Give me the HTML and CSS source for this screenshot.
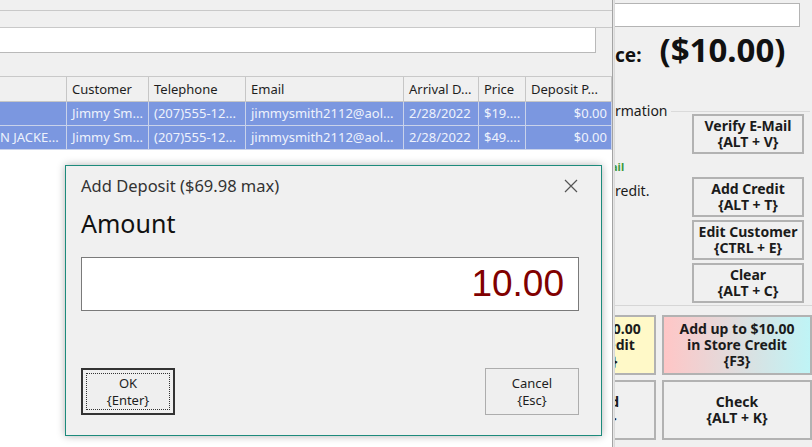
FILE: index.html
```html
<!DOCTYPE html>
<html lang="en">
<head>
    <meta charset="UTF-8">
    <meta name="viewport" content="width=device-width, initial-scale=1.0">
    <title>Add Deposit</title>
    <link rel="stylesheet" href="styles.css">
</head>
<body>
<div class="screen">
    <!-- Orders list -->
    <div class="orders">
        <div class="toolbar"></div>
        <div class="search-row"><div class="search-box"></div></div>
        <div class="grid">
            <div class="grid-row head">
                <div class="cell"></div>
                <div class="cell">Customer</div>
                <div class="cell">Telephone</div>
                <div class="cell">Email</div>
                <div class="cell">Arrival D...</div>
                <div class="cell">Price</div>
                <div class="cell">Deposit P...</div>
            </div>
            <div class="grid-row selected">
                <div class="cell"></div>
                <div class="cell">Jimmy Sm...</div>
                <div class="cell">(207)555-12...</div>
                <div class="cell">jimmysmith2112@aol...</div>
                <div class="cell">2/28/2022</div>
                <div class="cell">$19....</div>
                <div class="cell num">$0.00</div>
            </div>
            <div class="grid-row selected">
                <div class="cell first">N JACKE...</div>
                <div class="cell">Jimmy Sm...</div>
                <div class="cell">(207)555-12...</div>
                <div class="cell">jimmysmith2112@aol...</div>
                <div class="cell">2/28/2022</div>
                <div class="cell">$49....</div>
                <div class="cell num">$0.00</div>
            </div>
        </div>
    </div>

    <div class="splitter"></div>

    <!-- Customer side panel -->
    <div class="side">
        <div class="side-search"></div>
        <div class="balance">
            <span class="balance-label">ce:</span>
            <span class="balance-value">($10.00)</span>
        </div>
        <fieldset class="info">
            <legend>rmation</legend>
            <div class="info-body">
                <div class="info-notes">
                    <div class="verified">ail</div>
                    <div class="note">redit.</div>
                </div>
                <div class="info-buttons">
                    <button class="btn verify">Verify E-Mail<br>{ALT + V}</button>
                    <button class="btn">Add Credit<br>{ALT + T}</button>
                    <button class="btn">Edit Customer<br>{CTRL + E}</button>
                    <button class="btn">Clear<br>{ALT + C}</button>
                </div>
            </div>
        </fieldset>
        <div class="actions">
            <div class="clip"><button class="btn tall yellow">Use $10.00<br>as Credit<br>{F2}</button></div>
            <button class="btn tall gradient">Add up to $10.00<br>in Store Credit<br>{F3}</button>
            <div class="clip"><button class="btn tall wide">Card<br>{F4}</button></div>
            <button class="btn tall">Check<br>{ALT + K}</button>
        </div>
    </div>

    <!-- Modal dialog -->
    <div class="dialog">
        <div class="dialog-title">
            <span>Add Deposit ($69.98 max)</span>
            <svg class="close" width="14" height="14" viewBox="0 0 14 14">
                <path d="M1 1 L13 13 M13 1 L1 13" stroke="#555" stroke-width="1.2" fill="none"/>
            </svg>
        </div>
        <div class="amount-label">Amount</div>
        <div class="amount-input">10.00</div>
        <div class="dialog-buttons">
            <button class="dlg-btn default"><span class="focus">OK<br>{Enter}</span></button>
            <button class="dlg-btn">Cancel<br>{Esc}</button>
        </div>
    </div>
</div>
</body>
</html>
```

FILE: styles.css
```css
* {
    box-sizing: border-box;
}

body {
    margin: 0;
    background: #f0f0f0;
    font-family: 'Noto Sans', sans-serif;
    color: #1b1b1b;
}

.screen {
    position: relative;
    display: flex;
    width: 812px;
    height: 447px;
    overflow: hidden;
}

/* Orders list */
.orders {
    width: 612px;
    display: flex;
    flex-direction: column;
}

.toolbar {
    height: 11px;
    border-bottom: 1px solid #c9c9c9;
}

.search-row {
    margin-top: 16px;
    height: 49px;
    border-top: 1px solid #c9c9c9;
}

.search-box {
    width: 596px;
    height: 25px;
    background: #fff;
    border-right: 1px solid #b9b9b9;
    border-bottom: 1px solid #b9b9b9;
}

.grid {
    flex: 1;
    background: #fff;
    border-top: 1px solid #c9c9c9;
}

.grid-row {
    display: grid;
    grid-template-columns: 67px 82px 97px 158px 75px 47px 86px;
    height: 24px;
    font-size: 13px;
    line-height: 23px;
}

.grid-row.head {
    height: 25px;
    line-height: 24px;
    background: #f0f0f0;
    color: #1e1e1e;
}

.grid-row.head .cell {
    border-right: 1px solid #c6c6c6;
    border-bottom: 1px solid #c6c6c6;
}

.cell {
    padding: 0 5px;
    white-space: nowrap;
    overflow: hidden;
}

.cell.first {
    padding-left: 0;
}

.cell.num {
    text-align: right;
    padding-right: 4px;
}

.grid-row.selected {
    background: #7b97e0;
    color: #eef2fc;
}

.grid-row.selected .cell {
    border-right: 1px solid #c9d2ea;
    border-bottom: 1px solid #c9d2ea;
}

.splitter {
    width: 3px;
    border-left: 1px solid #a3a3a3;
    border-right: 1px solid #d9d9d9;
    background: #e6e6e6;
}

/* Side panel */
.side {
    width: 197px;
    display: flex;
    flex-direction: column;
    overflow: hidden;
}

.side-search {
    margin: 3px 12px 0 0;
    height: 24px;
    background: #fff;
    border: 1px solid #b4b4b4;
    border-left: none;
}

.balance {
    display: flex;
    align-items: baseline;
    gap: 18px;
    height: 50px;
    padding-top: 4px;
    font-weight: bold;
    color: #111;
}

.balance-label {
    font-size: 19px;
}

.balance-value {
    font-size: 33px;
    line-height: 38px;
}

.info {
    margin: 31px 2px 0 0;
    padding: 0;
    border: none;
    border-top: 1px solid #dadada;
    min-inline-size: 0;
}

.info legend {
    padding: 0 3px 0 0;
    font-size: 14px;
    line-height: 6px;
}

.info-body {
    display: flex;
}

.info-notes {
    width: 77px;
    overflow: hidden;
}

.verified {
    margin: 47px 0 0 -4px;
    font-size: 11px;
    line-height: 12px;
    font-weight: bold;
    color: #3c9a3c;
}

.note {
    margin-top: 10px;
    font-size: 14px;
    line-height: 16px;
}

.info-buttons {
    display: flex;
    flex-direction: column;
    gap: 3px;
    width: 112px;
}

.btn {
    height: 40px;
    padding: 0;
    background: #f0f0f0;
    border: 2px solid #b2b2b2;
    font-family: 'Noto Sans', sans-serif;
    font-size: 14px;
    line-height: 16px;
    font-weight: bold;
    color: #1b1b1b;
    white-space: nowrap;
}

.btn.verify {
    margin-bottom: 20px;
}

.actions {
    display: grid;
    grid-template-columns: 41px 150px;
    grid-template-rows: 60px 60px;
    column-gap: 6px;
    row-gap: 5px;
    margin-top: 2px;
    padding-top: 9px;
    border-top: 1px solid #d6d6d6;
}

.btn.tall {
    height: 60px;
}

.clip {
    display: flex;
    justify-content: flex-end;
    overflow: hidden;
}

.clip .btn {
    flex-shrink: 0;
    width: 104px;
}

.clip .btn.wide {
    width: 106px;
}

.btn.yellow {
    background: #fff9c8;
}

.btn.gradient {
    background: linear-gradient(to right, #ffc6c6, #bff4f6);
}

/* Modal dialog */
.dialog {
    position: absolute;
    left: 65px;
    top: 165px;
    width: 537px;
    height: 271px;
    padding: 0 22px 0 15px;
    background: #f0f0f0;
    border: 1px solid #1d8b7c;
    box-shadow: 0 0 8px rgba(0, 0, 0, 0.3);
}

.dialog-title {
    display: flex;
    justify-content: space-between;
    align-items: center;
    height: 39px;
    font-size: 16.5px;
    color: #333;
}

.close {
    margin-right: 1px;
}

.amount-label {
    margin-top: 3px;
    font-size: 25px;
    line-height: 30px;
    color: #111;
}

.amount-input {
    display: flex;
    align-items: center;
    justify-content: flex-end;
    margin-top: 19px;
    height: 54px;
    padding-right: 14px;
    background: #fff;
    border: 1px solid #7a7a7a;
    font-family: 'Liberation Sans', sans-serif;
    font-size: 37px;
    color: #800000;
}

.dialog-buttons {
    display: flex;
    justify-content: space-between;
    margin-top: 57px;
}

.dlg-btn {
    width: 94px;
    height: 47px;
    padding: 0;
    background: #efefef;
    border: 1px solid #adadad;
    font-family: 'Noto Sans', sans-serif;
    font-size: 13px;
    line-height: 17px;
    color: #1e1e1e;
}

.dlg-btn.default {
    padding: 3px;
    border: 2px solid #333;
}

.focus {
    display: flex;
    flex-direction: column;
    justify-content: center;
    height: 100%;
    border: 1px dotted #333;
}
```
